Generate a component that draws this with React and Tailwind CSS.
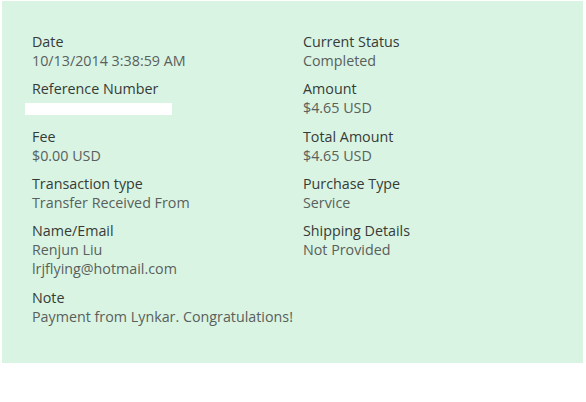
export default function App() {
  const left = [
    { label: "Date", values: ["10/13/2014 3:38:59 AM"] },
    { label: "Reference Number", values: [null] },
    { label: "Fee", values: ["$0.00 USD"] },
    { label: "Transaction type", values: ["Transfer Received From"] },
    { label: "Name/Email", values: ["Renjun Liu", "lrjflying@hotmail.com"] },
    { label: "Note", values: ["Payment from Lynkar. Congratulations!"] },
  ];
  const right = [
    { label: "Current Status", values: ["Completed"] },
    { label: "Amount", values: ["$4.65 USD"] },
    { label: "Total Amount", values: ["$4.65 USD"] },
    { label: "Purchase Type", values: ["Service"] },
    { label: "Shipping Details", values: ["Not Provided"] },
  ];
  const Col = ({ items }) => (
    <div className="flex flex-col gap-[9px]">
      {items.map((it) => (
        <div key={it.label} className="flex flex-col">
          <div className="text-[#363b38] leading-[19px]">{it.label}</div>
          {it.values.map((v, i) =>
            v === null ? (
              <div key={i} className="h-[19.25px] relative">
                <div className="absolute left-[-7px] top-[5px] h-[12px] w-[147px] bg-white" />
              </div>
            ) : (
              <div key={i} className="text-[#5a605c] leading-[19.25px]">{v}</div>
            )
          )}
        </div>
      ))}
    </div>
  );
  return (
    <div className="w-[586px] h-[402px] bg-white pt-[1px] pl-[2px]" style={{ fontFamily: '"Open Sans", sans-serif' }}>
      <div className="w-[581px] h-[362px] bg-[#d9f4e3] pl-[30px] pt-[31px] grid grid-cols-[271px_1fr] text-[14.3px]">
        <Col items={left} />
        <Col items={right} />
      </div>
    </div>
  );
}
